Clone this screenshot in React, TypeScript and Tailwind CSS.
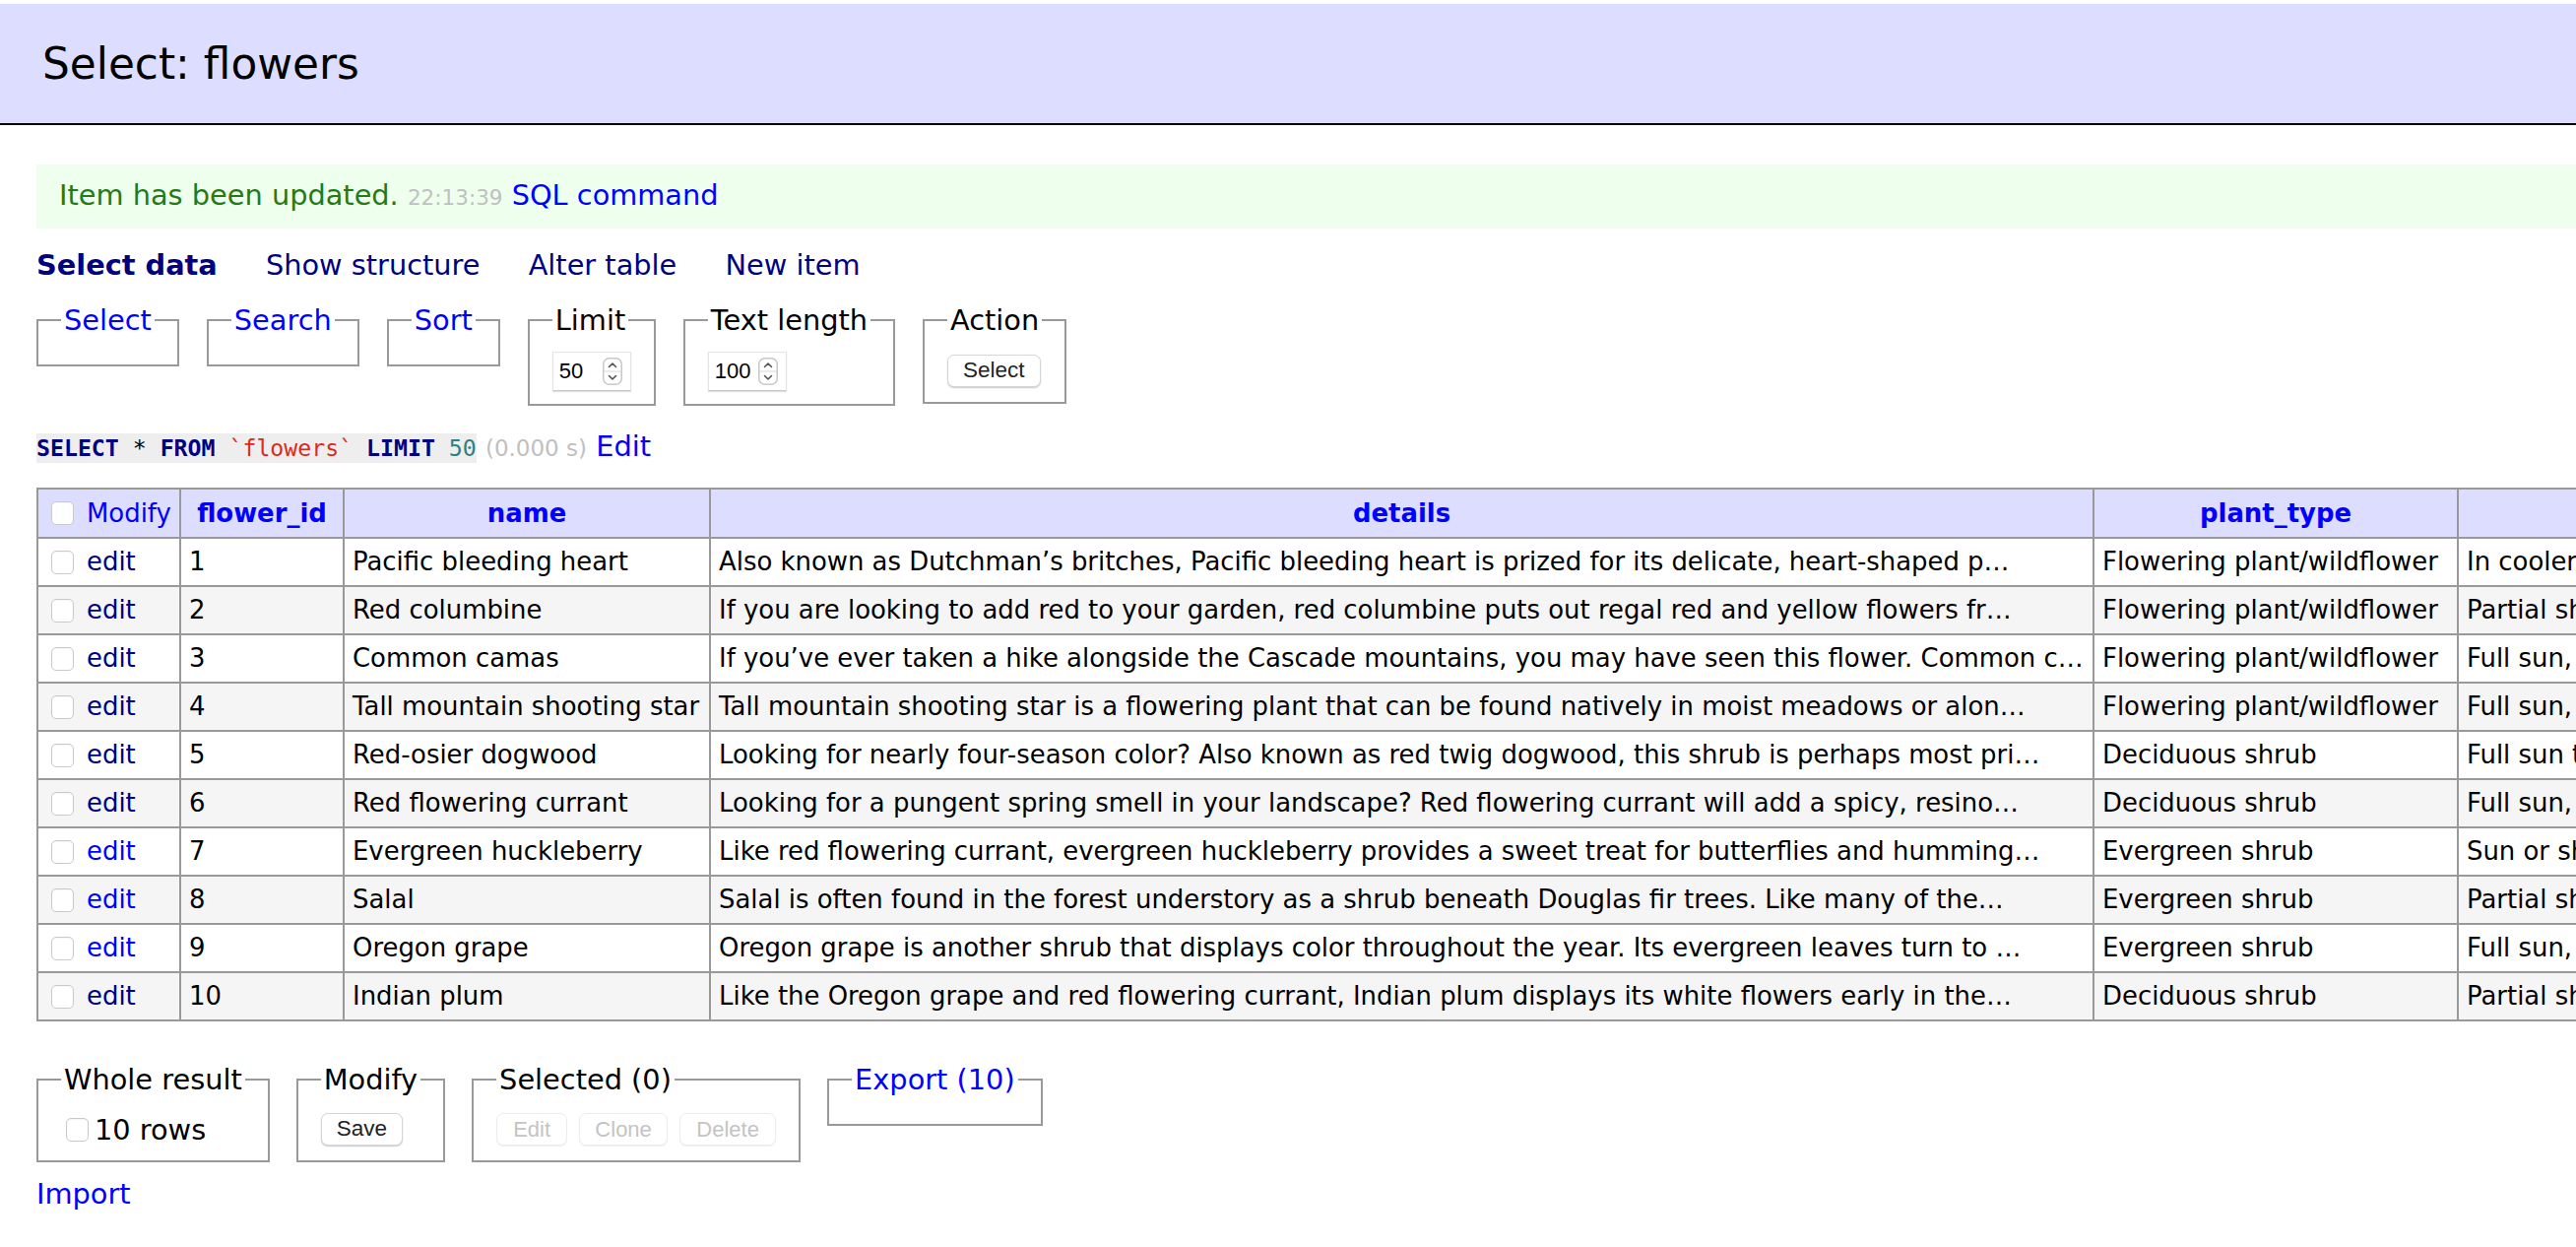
import React from 'react'

const link = 'text-[#0000ff]'
const visited = 'text-[#000080]'
const fieldsetClass = 'border-2 border-[#999] px-[23px] pt-[14px] pb-[13px] min-w-0'
const legendClass = 'px-[3px]'
const btn = "h-[33px] px-[15px] rounded-[7px] bg-white border border-[#d6d6d6] shadow-[0_1px_1.5px_rgba(0,0,0,0.22)] font-['Liberation_Sans',Arial,sans-serif] text-[22.5px] leading-none text-[#222]"
const btnDisabled = "h-[33px] px-[14px] rounded-[7px] bg-white border border-[#ececec] shadow-[0_1px_1px_rgba(0,0,0,0.06)] font-['Liberation_Sans',Arial,sans-serif] text-[22px] leading-none text-[#c4c4c4]"

type Row = { id: number; name: string; details: string; type: string; sun: string; seen: boolean }

const rows: Row[] = [
  { id: 1, name: 'Pacific bleeding heart', details: 'Also known as Dutchman’s britches, Pacific bleeding heart is prized for its delicate, heart-shaped p…', type: 'Flowering plant/wildflower', sun: 'In cooler areas, full sun; in warmer areas, partial shade', seen: true },
  { id: 2, name: 'Red columbine', details: 'If you are looking to add red to your garden, red columbine puts out regal red and yellow flowers fr…', type: 'Flowering plant/wildflower', sun: 'Partial shade to full sun', seen: true },
  { id: 3, name: 'Common camas', details: 'If you’ve ever taken a hike alongside the Cascade mountains, you may have seen this flower. Common c…', type: 'Flowering plant/wildflower', sun: 'Full sun, partial shade', seen: true },
  { id: 4, name: 'Tall mountain shooting star', details: 'Tall mountain shooting star is a flowering plant that can be found natively in moist meadows or alon…', type: 'Flowering plant/wildflower', sun: 'Full sun, partial shade', seen: true },
  { id: 5, name: 'Red-osier dogwood', details: 'Looking for nearly four-season color? Also known as red twig dogwood, this shrub is perhaps most pri…', type: 'Deciduous shrub', sun: 'Full sun  to partial shade', seen: true },
  { id: 6, name: 'Red flowering currant', details: 'Looking for a pungent spring smell in your landscape? Red flowering currant will add a spicy, resino…', type: 'Deciduous shrub', sun: 'Full sun, partial shade', seen: true },
  { id: 7, name: 'Evergreen huckleberry', details: 'Like red flowering currant, evergreen huckleberry provides a sweet treat for butterflies and humming…', type: 'Evergreen shrub', sun: 'Sun or shade', seen: false },
  { id: 8, name: 'Salal', details: 'Salal is often found in the forest understory as a shrub beneath Douglas fir trees. Like many of the…', type: 'Evergreen shrub', sun: 'Partial shade', seen: false },
  { id: 9, name: 'Oregon grape', details: 'Oregon grape is another shrub that displays color throughout the year. Its evergreen leaves turn to …', type: 'Evergreen shrub', sun: 'Full sun, partial shade', seen: false },
  { id: 10, name: 'Indian plum', details: 'Like the Oregon grape and red flowering currant, Indian plum displays its white flowers early in the…', type: 'Deciduous shrub', sun: 'Partial shade to full sun', seen: true },
]

function Checkbox() {
  return <span className="inline-block w-[23px] h-[24px] rounded-[5px] border border-[#c9c9c9] bg-white shadow-[inset_0_1px_1px_rgba(0,0,0,0.04)] shrink-0" />
}

function NumberBox({ value, width }: { value: string; width: string }) {
  return (
    <div className={`flex items-center h-[40px] ${width} bg-white border border-[#e4e4e4] border-b-[#c8c8c8] shadow-[0_1px_1px_rgba(0,0,0,0.12)] pl-[6px] pr-[8px] font-['Liberation_Sans',Arial,sans-serif] text-[22px] leading-none`}>
      <span className="flex-1">{value}</span>
      <svg width="20" height="28" viewBox="0 0 20 28" className="shrink-0">
        <rect x="0.75" y="0.75" width="18.5" height="26.5" rx="6" fill="#fff" stroke="#c8c8c8" strokeWidth="1.5" />
        <line x1="1" y1="14" x2="19" y2="14" stroke="#d8d8d8" strokeWidth="1" />
        <path d="M6.5 9.5 L10 6 L13.5 9.5" fill="none" stroke="#555" strokeWidth="1.6" strokeLinecap="round" strokeLinejoin="round" />
        <path d="M6.5 18.5 L10 22 L13.5 18.5" fill="none" stroke="#555" strokeWidth="1.6" strokeLinecap="round" strokeLinejoin="round" />
      </svg>
    </div>
  )
}

export default function App() {
  return (
    <div className="min-h-screen w-full overflow-hidden bg-white text-black font-['DejaVu_Sans',Verdana,sans-serif] text-[28.8px] leading-[36px]">
      <h2 className="mt-[4px] bg-[#ddf] border-b-2 border-black pl-[43px] pt-[34px] pb-[33px] text-[43.8px] leading-[54px] font-normal whitespace-nowrap">
        Select: flowers
      </h2>

      <div className="pl-[37px]">
        <div className="mt-[40px] bg-[#efe] py-[13px] pl-[23px] text-[#257a16] whitespace-nowrap">
          Item has been updated. <span className="text-[21.5px] text-[#c0c0c0]">22:13:39</span> <a className={link}>SQL command</a>
        </div>

        <p className="mt-[19px] whitespace-nowrap">
          <a className={`${visited} font-bold mr-[40px]`}>Select data</a>{' '}
          <a className={`${visited} mr-[40px]`}>Show structure</a>{' '}
          <a className={`${visited} mr-[40px]`}>Alter table</a>{' '}
          <a className={visited}>New item</a>
        </p>

        <div className="mt-[20px] flex items-start gap-[28px]">
          <fieldset className={fieldsetClass}>
            <legend className={legendClass}><a className={link}>Select</a></legend>
          </fieldset>
          <fieldset className={fieldsetClass}>
            <legend className={legendClass}><a className={link}>Search</a></legend>
          </fieldset>
          <fieldset className={fieldsetClass}>
            <legend className={legendClass}><a className={link}>Sort</a></legend>
          </fieldset>
          <fieldset className={fieldsetClass}>
            <legend className={legendClass}>Limit</legend>
            <NumberBox value="50" width="w-[80px]" />
          </fieldset>
          <fieldset className={fieldsetClass}>
            <legend className={legendClass}>Text length</legend>
            <NumberBox value="100" width="w-[80px]" />
          </fieldset>
          <fieldset className={fieldsetClass}>
            <legend className={legendClass}>Action</legend>
            <div className="h-[38px] flex items-center">
              <button className={btn}>Select</button>
            </div>
          </fieldset>
        </div>

        <p className="mt-[23px] whitespace-nowrap">
          <code className="inline-block bg-[#eee] font-['DejaVu_Sans_Mono',monospace] text-[23.2px] leading-[30px]">
            <span className="font-bold text-[#000080]">SELECT</span> * <span className="font-bold text-[#000080]">FROM</span>{' '}
            <span className="text-[#dd2a1b]">`flowers`</span> <span className="font-bold text-[#000080]">LIMIT</span>{' '}
            <span className="text-[#2f8080]">50</span>
          </code>{' '}
          <span className="text-[23px] text-[#c0c0c0]">(0.000 s)</span> <a className={link}>Edit</a>
        </p>

        <table className="mt-[22px] table-fixed border-collapse border-2 border-[#999] w-[3258px] text-[25.92px] leading-[33px]">
          <colgroup>
            <col className="w-[145px]" />
            <col className="w-[166px]" />
            <col className="w-[372px]" />
            <col className="w-[1405px]" />
            <col className="w-[370px]" />
            <col className="w-[800px]" />
          </colgroup>
          <thead>
            <tr className="bg-[#ddf]">
              <th className="border-2 border-[#999] px-[8px] py-[7px] font-normal text-left leading-[34px]">
                <div className="flex items-center h-[34px] pl-[5px] gap-[13px]">
                  <Checkbox />
                  <a className={link}>Modify</a>
                </div>
              </th>
              {['flower_id', 'name', 'details', 'plant_type', 'sun_exposure'].map((h) => (
                <th key={h} className="border-2 border-[#999] px-[8px] py-[7px] font-bold text-center leading-[34px] whitespace-nowrap overflow-hidden">
                  <a className={link}>{h}</a>
                </th>
              ))}
            </tr>
          </thead>
          <tbody>
            {rows.map((r, i) => (
              <tr key={r.id} className={i % 2 === 1 ? 'bg-[#f5f5f5]' : 'bg-white'}>
                <td className="border-2 border-[#999] px-[8px] py-[7px]">
                  <div className="flex items-center h-[33px] pl-[5px] gap-[13px]">
                    <Checkbox />
                    <a className={r.seen ? visited : link}>edit</a>
                  </div>
                </td>
                <td className="border-2 border-[#999] px-[8px] py-[7px] whitespace-nowrap overflow-hidden">{r.id}</td>
                <td className="border-2 border-[#999] px-[8px] py-[7px] whitespace-nowrap overflow-hidden">{r.name}</td>
                <td className="border-2 border-[#999] px-[8px] py-[7px] whitespace-nowrap overflow-hidden">{r.details}</td>
                <td className="border-2 border-[#999] px-[8px] py-[7px] whitespace-nowrap overflow-hidden">{r.type}</td>
                <td className="border-2 border-[#999] px-[8px] py-[7px] whitespace-nowrap overflow-hidden">{r.sun}</td>
              </tr>
            ))}
          </tbody>
        </table>

        <div className="mt-[41px] flex items-start gap-[27px]">
          <fieldset className={fieldsetClass}>
            <legend className={legendClass}>Whole result</legend>
            <div className="h-[37px] flex items-center whitespace-nowrap">
              <span className="ml-[5px] mr-[6px] flex"><Checkbox /></span>10 rows
            </div>
          </fieldset>
          <fieldset className={fieldsetClass}>
            <legend className={legendClass}>Modify</legend>
            <div className="h-[37px] flex items-center">
              <button className={btn}>Save</button>
            </div>
          </fieldset>
          <fieldset className={fieldsetClass}>
            <legend className={legendClass}>Selected (0)</legend>
            <div className="h-[37px] flex items-center gap-[12px]">
              <button className={`${btnDisabled} w-[72px]`}>Edit</button>
              <button className={`${btnDisabled} w-[90px]`}>Clone</button>
              <button className={`${btnDisabled} w-[98px]`}>Delete</button>
            </div>
          </fieldset>
          <fieldset className={fieldsetClass}>
            <legend className={legendClass}><a className={link}>Export (10)</a></legend>
          </fieldset>
        </div>

        <p className="mt-[14px] pb-[20px]">
          <a className={link}>Import</a>
        </p>
      </div>
    </div>
  )
}
